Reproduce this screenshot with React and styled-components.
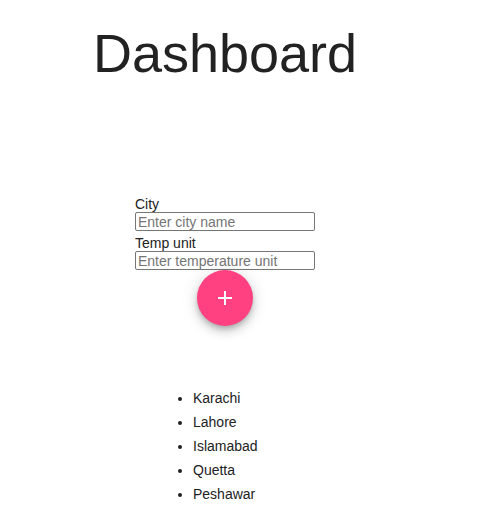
import React, { useState } from 'react';
import styled, { createGlobalStyle } from 'styled-components';

const GlobalStyle = createGlobalStyle`
  body {
    margin: 0;
    background: #fff;
    font-family: "Liberation Sans", Arial, sans-serif;
    color: #222;
  }
`;

const Page = styled.main`
  width: 450px;
  display: flex;
  flex-direction: column;
  align-items: center;
`;

const Heading = styled.h1`
  margin: 22px 0 0;
  font-size: 54px;
  font-weight: 400;
  line-height: 62px;
  color: #222;
`;

const Form = styled.form`
  margin-top: 112px;
  width: 180px;
  display: flex;
  flex-direction: column;
`;

const Label = styled.label`
  font-size: 14px;
  line-height: 16px;
  color: #222;
`;

const Input = styled.input`
  box-sizing: border-box;
  width: 180px;
  height: 19px;
  margin: 0 0 4px;
  padding: 0 2px;
  border: 1px solid #767676;
  border-radius: 2px;
  font-family: "Liberation Sans", Arial, sans-serif;
  font-size: 14px;
  color: #222;

  &::placeholder {
    color: #757575;
  }
`;

const Fab = styled.button`
  align-self: center;
  width: 56px;
  height: 56px;
  margin-top: -4px;
  border: none;
  border-radius: 50%;
  background: #ff4081;
  color: #fff;
  display: flex;
  align-items: center;
  justify-content: center;
  padding: 0;
  cursor: pointer;
  box-shadow: 0 3px 5px -1px rgba(0, 0, 0, 0.2), 0 6px 10px 0 rgba(0, 0, 0, 0.14),
    0 1px 18px 0 rgba(0, 0, 0, 0.12);
`;

const CityList = styled.ul`
  margin: 60px 0 0;
  padding-left: 40px;
  width: 104px;
  list-style: disc;
`;

const CityItem = styled.li`
  font-size: 14px;
  line-height: 24px;
  color: #222;
`;

const PlusIcon = () => (
  <svg width="24" height="24" viewBox="0 0 24 24" fill="currentColor">
    <path d="M19 13h-6v6h-2v-6H5v-2h6V5h2v6h6v2z" />
  </svg>
);

const App = () => {
  const [cities] = useState(['Karachi', 'Lahore', 'Islamabad', 'Quetta', 'Peshawar']);

  return (
    <Page>
      <GlobalStyle />
      <Heading>Dashboard</Heading>
      <Form onSubmit={(e) => e.preventDefault()}>
        <Label htmlFor="city">City</Label>
        <Input id="city" placeholder="Enter city name" />
        <Label htmlFor="unit">Temp unit</Label>
        <Input id="unit" placeholder="Enter temperature unit" />
        <Fab type="submit" aria-label="add">
          <PlusIcon />
        </Fab>
      </Form>
      <CityList>
        {cities.map((city) => (
          <CityItem key={city}>{city}</CityItem>
        ))}
      </CityList>
    </Page>
  );
};

export default App;
